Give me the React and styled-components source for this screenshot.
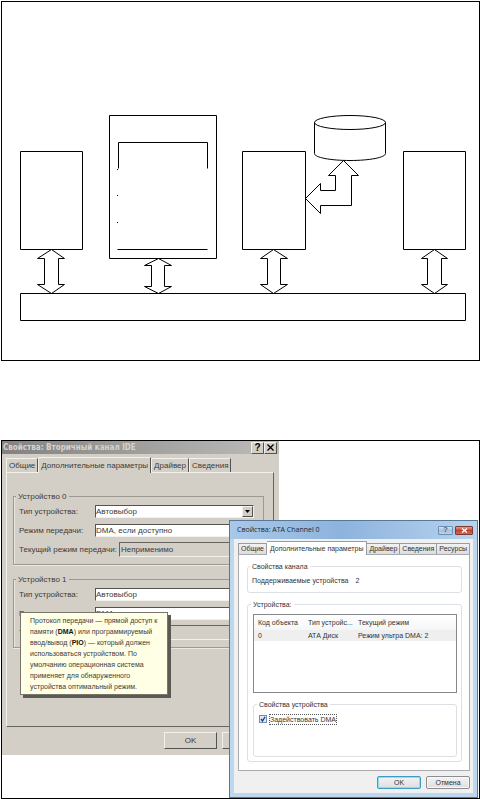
import { useState } from "react";
import styled, { createGlobalStyle, css } from "styled-components";

const GlobalStyle = createGlobalStyle`
  * {
    box-sizing: border-box;
  }
  body {
    margin: 0;
    background: #fff;
    font-family: "Liberation Sans", Arial, sans-serif;
    color: #333;
  }
`;

const Page = styled.main`
  display: flex;
  flex-direction: column;
  gap: 79px;
  padding: 1px 0 0 1px;
`;

const Frame = styled.section`
  border: 1px solid #000;
`;

const Diagram = styled.svg`
  display: block;
  width: 100%;
  height: auto;
  fill: none;
  stroke: #000;
  stroke-width: 1;
`;

/* both windows share one grid cell, the second lies over the first */
const Desktop = styled(Frame)`
  display: grid;
`;

const ClassicWindow = styled.div`
  grid-area: 1 / 1;
  position: relative;
  justify-self: start;
  align-self: start;
  width: calc(100% - 200px);
  background: #d3cfc7;
  color: #3c3b3a;
  font-size: 8px;
  line-height: 11px;
`;

const ClassicTitleBar = styled.header`
  display: flex;
  align-items: center;
  justify-content: space-between;
  height: 13px;
  padding: 0 2px 0 1px;
  background: linear-gradient(to right, #828282, #bdbcba);
`;

const ClassicTitle = styled.h2`
  margin: 0;
  font: bold 8px/12px "DejaVu Sans Condensed", "DejaVu Sans", sans-serif;
  color: #d6d3cd;
`;

const ClassicTitleButtons = styled.div`
  display: flex;
`;

const ClassicTitleButton = styled.button`
  display: flex;
  align-items: center;
  justify-content: center;
  width: 13px;
  height: 12px;
  padding: 0;
  border: 1px solid;
  border-color: #f3f1ec #55534f #55534f #f3f1ec;
  background: #d3cfc7;
  font: bold 10px/10px "Liberation Sans", sans-serif;
  color: #000;
`;

const ClassicTabs = styled.div`
  display: flex;
  align-items: flex-end;
  height: 18px;
  padding-left: 4px;
`;

const ClassicTab = styled.button`
  height: ${(p) => (p.$active ? 16 : 14)}px;
  margin-bottom: ${(p) => (p.$active ? -1 : 0)}px;
  padding: 0 2px;
  border: 1px solid;
  border-color: #f3f1ec #55534f transparent #f3f1ec;
  border-bottom: 0;
  background: #d3cfc7;
  font: inherit;
  color: inherit;
  white-space: nowrap;
  z-index: ${(p) => (p.$active ? 1 : 0)};
`;

const ClassicPanel = styled.div`
  display: flex;
  flex-direction: column;
  gap: 9px;
  margin: 0 5px 0 4px;
  padding: 18px 9px 78px 6px;
  border: 1px solid;
  border-color: #f3f1ec #66645f #66645f #f3f1ec;
`;

const ClassicGroup = styled.fieldset`
  min-width: 0;
  margin: 0;
  padding: 0 9px 5px 5px;
  border: 1px solid #9c9993;
  box-shadow: inset 1px 0 #ebe8e2, 0 1px #ebe8e2;
`;

const ClassicLegend = styled.legend`
  margin-left: -3px;
  padding: 0 2px;
`;

const Field = styled.div`
  display: flex;
  align-items: center;
  height: 19px;
`;

const FieldLabel = styled.label`
  flex: none;
  width: ${(p) => (p.$wide ? 100 : 76)}px;
  white-space: nowrap;
`;

const SelectBox = styled.div`
  display: flex;
  flex: 1;
  height: 13px;
  border: 1px solid;
  border-color: #55534f #f3f1ec #f3f1ec #55534f;
  background: #fff;
`;

const Select = styled.select`
  flex: 1;
  min-width: 0;
  padding: 0;
  border: 0;
  background: none;
  appearance: none;
  font: inherit;
  color: inherit;
`;

const SelectArrow = styled.span`
  display: flex;
  align-items: center;
  justify-content: center;
  width: 11px;
  border: 1px solid;
  border-color: #f3f1ec #55534f #55534f #f3f1ec;
  background: #d3cfc7;
  pointer-events: none;
`;

const ReadOnlyInput = styled.input`
  flex: 1;
  min-width: 0;
  height: 15px;
  padding: 0 1px;
  border: 1px solid;
  border-color: #66645f #f3f1ec #f3f1ec #66645f;
  background: #d3cfc7;
  font: inherit;
  color: inherit;
`;

const ClassicFooter = styled.footer`
  display: flex;
  justify-content: flex-end;
  gap: 5px;
  padding: 5px 4px 6px;
`;

const ClassicButton = styled.button`
  width: 53px;
  height: 17px;
  padding: 0;
  border: 1px solid;
  border-color: #f3f1ec #55534f #55534f #f3f1ec;
  background: #d3cfc7;
  font: inherit;
  color: inherit;
`;

const Tooltip = styled.div`
  position: absolute;
  top: 171px;
  left: 18px;
  min-width: 148px;
  padding: 2px 3px 2px 9px;
  border: 1px solid #77756c;
  background: #ffffe6;
  box-shadow: 3px 3px #5b5954;
  font-size: 7px;
  white-space: nowrap;

  b {
    color: #111;
  }
`;

const AeroWindow = styled.div`
  grid-area: 1 / 1;
  position: relative;
  justify-self: end;
  width: calc(100% - 228px);
  margin: 79px 1px 0 0;
  padding: 0 4px 4px;
  border: 1px solid #56799a;
  background: #bdd7ee;
  font-size: 7px;
  line-height: 11px;
`;

const AeroTitleBar = styled.header`
  display: flex;
  align-items: center;
  justify-content: space-between;
  height: 18px;
  margin: 0 -4px;
  padding: 0 4px 0 7px;
  background: linear-gradient(to right, #a9c8e8, #8db3dd 45%, #b7d3ee);
`;

const AeroTitle = styled.h2`
  margin: 0;
  font: 7px/12px "Open Sans", "Noto Sans", sans-serif;
  color: #1c2733;
`;

const AeroTitleButtons = styled.div`
  display: flex;
  gap: 2px;
`;

const AeroTitleButton = styled.button`
  display: flex;
  align-items: center;
  justify-content: center;
  width: ${(p) => (p.$close ? 18 : 15)}px;
  height: 9px;
  padding: 0;
  border: 1px solid ${(p) => (p.$close ? "#7d3b38" : "#6f8fae")};
  border-radius: 1px;
  background: ${(p) =>
    p.$close
      ? "linear-gradient(#e29b8c, #c4432c 50%, #d2694f)"
      : "linear-gradient(#d5e5f5, #a4c1de 50%, #b9d2ea)"};
  font: bold 8px/8px "Liberation Sans", sans-serif;
  color: #4d6784;
`;

const AeroClient = styled.div`
  padding: 2px 3px 4px 4px;
  background: #f0f0f0;
`;

const AeroTabs = styled.div`
  display: flex;
  align-items: flex-end;
`;

const AeroTab = styled.button`
  height: 11px;
  padding: 0 2px;
  border: 1px solid #9a9c9f;
  border-bottom: 0;
  background: linear-gradient(#f2f2f2, #dcdcdc);
  font: inherit;
  line-height: 10px;
  color: inherit;
  white-space: nowrap;

  & + & {
    border-left: 0;
  }

  ${(p) =>
    p.$active &&
    css`
      height: 14px;
      margin-bottom: -1px;
      padding: 0 3px;
      background: #fff;
      z-index: 1;
    `}
`;

const AeroPanel = styled.div`
  display: flex;
  flex-direction: column;
  gap: 6px;
  padding: 6px 7px 8px 8px;
  border: 1px solid #a9abae;
  background: #fff;
`;

const AeroGroup = styled.fieldset`
  min-width: 0;
  margin: 0;
  padding: ${(p) => p.$padding};
  border: 1px solid #dcdfe3;
  border-radius: 3px;
`;

const AeroLegend = styled.legend`
  margin-left: -2px;
  padding: 0 2px;
`;

const Support = styled.p`
  display: flex;
  gap: 7px;
  margin: 0;
`;

const DeviceList = styled.div`
  height: 79px;
  margin-bottom: 6px;
  border: 1px solid #85888c;
`;

const DeviceTable = styled.table`
  width: 100%;
  table-layout: fixed;
  border-collapse: collapse;

  th,
  td {
    padding: 0 0 0 4px;
    font-weight: normal;
    text-align: left;
    white-space: nowrap;
  }

  th {
    height: 15px;
    background: linear-gradient(#fff, #f5f6f7);
  }

  td {
    height: 11px;
    background: #efefef;
  }

  th:nth-child(-n + 2) {
    width: 50px;
  }
`;

const CheckLabel = styled.label`
  display: flex;
  align-items: center;
  gap: 2px;
  height: 12px;

  span {
    padding: 0 1px;
    outline: 1px dotted #555;
    outline-offset: -1px;
  }
`;

const Checkbox = styled.input`
  width: 8px;
  height: 8px;
  margin: 0;
  appearance: none;
  border: 1px solid #6f8fb0;
  background: #dfeaf6;

  &:checked {
    background: #dfeaf6
      url("data:image/svg+xml,%3Csvg xmlns='http://www.w3.org/2000/svg' viewBox='0 0 6 6'%3E%3Cpath d='M1 3l1.5 2L5 .8' fill='none' stroke='%23203a80' stroke-width='1.3'/%3E%3C/svg%3E");
  }
`;

const AeroFooter = styled.footer`
  display: flex;
  justify-content: flex-end;
  gap: 5px;
  padding-top: 5px;
`;

const AeroButton = styled.button`
  width: 44px;
  height: 13px;
  padding: 0;
  border: 1px solid ${(p) => (p.$primary ? "#3b9cc4" : "#8b8d90")};
  border-radius: 2px;
  background: linear-gradient(#f4f4f4, #dedede);
  box-shadow: inset 0 0 0 1px ${(p) => (p.$primary ? "#8fdcf5" : "#f8f8f8")};
  font: inherit;
  line-height: 10px;
  color: inherit;
`;

// arrow between a block and the bus
function BusArrow({ x, top, left, right, shaftLeft, shaftRight, head }) {
  const bottom = 293;
  return (
    <path
      d={`M${x} ${top}L${right} ${top + head}H${shaftRight}V${bottom - head}H${right}L${x} ${bottom}L${left} ${bottom - head}H${shaftLeft}V${top + head}H${left}Z`}
    />
  );
}

function BusDiagram() {
  return (
    <Diagram viewBox="2 2 477 358" aria-hidden="true">
      <g transform="translate(.5 .5)">
        <path d="M20 151H82V249H20Z" />
        <path d="M109 115H216V258H109Z" />
        <path d="M242 151H305V249H242Z" />
        <path d="M403 151H465V249H403Z" />
        <path d="M20 293H465V320H20Z" />
        <path d="M118 168V142H207V168M117 249H207" />
        <path d="M116.5 169h1M116.5 195h1M116.5 222h1" />
        <ellipse cx="349.5" cy="122" rx="35.5" ry="7" />
        <path d="M314 122V153C314 157 330 160 349.5 160S385 157 385 153V122" />
        <BusArrow x={51} top={249} left={37} right={64} shaftLeft={44} shaftRight={58} head={9} />
        <BusArrow x={158} top={258} left={144} right={171} shaftLeft={151} shaftRight={164} head={7} />
        <BusArrow x={273} top={249} left={260} right={287} shaftLeft={267} shaftRight={280} head={9} />
        <BusArrow x={434} top={249} left={421} right={447} shaftLeft={427} shaftRight={441} head={9} />
        <path d="M343 160L358 175H351V205H320V213L305 198L320 183V190H335V175H328Z" />
      </g>
    </Diagram>
  );
}

function DropDown({ id, value }) {
  return (
    <SelectBox>
      <Select id={id} defaultValue={value}>
        <option>{value}</option>
      </Select>
      <SelectArrow>
        <svg width="5" height="3" viewBox="0 0 5 3">
          <path d="M0 0H5L2.5 3Z" fill="#000" />
        </svg>
      </SelectArrow>
    </SelectBox>
  );
}

function DeviceSettings({ index, mode, current }) {
  const id = `device-${index}`;
  return (
    <ClassicGroup>
      <ClassicLegend>Устройство {index}</ClassicLegend>
      <Field>
        <FieldLabel htmlFor={`${id}-type`}>Тип устройства:</FieldLabel>
        <DropDown id={`${id}-type`} value="Автовыбор" />
      </Field>
      <Field>
        <FieldLabel htmlFor={`${id}-mode`}>Режим передачи:</FieldLabel>
        <DropDown id={`${id}-mode`} value={mode} />
      </Field>
      <Field>
        <FieldLabel $wide htmlFor={`${id}-current`}>
          Текущий режим передачи:
        </FieldLabel>
        <ReadOnlyInput id={`${id}-current`} readOnly value={current} />
      </Field>
    </ClassicGroup>
  );
}

function IdeChannelWindow() {
  return (
    <ClassicWindow>
      <ClassicTitleBar>
        <ClassicTitle>Свойства: Вторичный канал IDE</ClassicTitle>
        <ClassicTitleButtons>
          <ClassicTitleButton>?</ClassicTitleButton>
          <ClassicTitleButton aria-label="Закрыть">
            <svg width="7" height="7" viewBox="0 0 7 7">
              <path d="M.5 .5L6.5 6.5M6.5 .5L.5 6.5" stroke="#000" strokeWidth="1.3" />
            </svg>
          </ClassicTitleButton>
        </ClassicTitleButtons>
      </ClassicTitleBar>
      <ClassicTabs>
        <ClassicTab>Общие</ClassicTab>
        <ClassicTab $active>Дополнительные параметры</ClassicTab>
        <ClassicTab>Драйвер</ClassicTab>
        <ClassicTab>Сведения</ClassicTab>
      </ClassicTabs>
      <ClassicPanel>
        <DeviceSettings index={0} mode="DMA, если доступно" current="Неприменимо" />
        <DeviceSettings index={1} mode="DMA" current="" />
      </ClassicPanel>
      <ClassicFooter>
        <ClassicButton>OK</ClassicButton>
        <ClassicButton aria-label="Отмена" />
      </ClassicFooter>
      <Tooltip role="tooltip">
        Протокол передачи — прямой доступ к<br />
        памяти (<b>DMA</b>) или программируемый<br />
        ввод/вывод (<b>PIO</b>) — который должен<br />
        использоваться устройством. По<br />
        умолчанию операционная система<br />
        применяет для обнаруженного<br />
        устройства оптимальный режим.
      </Tooltip>
    </ClassicWindow>
  );
}

function AtaChannelWindow() {
  const [dma, setDma] = useState(true);
  return (
    <AeroWindow>
      <AeroTitleBar>
        <AeroTitle>Свойства: ATA Channel 0</AeroTitle>
        <AeroTitleButtons>
          <AeroTitleButton>?</AeroTitleButton>
          <AeroTitleButton $close aria-label="Закрыть">
            <svg width="7" height="5" viewBox="0 0 7 5">
              <path d="M1 .5L6 4.5M6 .5L1 4.5" stroke="#fff" strokeWidth="1.4" />
            </svg>
          </AeroTitleButton>
        </AeroTitleButtons>
      </AeroTitleBar>
      <AeroClient>
        <AeroTabs>
          <AeroTab>Общие</AeroTab>
          <AeroTab $active>Дополнительные параметры</AeroTab>
          <AeroTab>Драйвер</AeroTab>
          <AeroTab>Сведения</AeroTab>
          <AeroTab>Ресурсы</AeroTab>
        </AeroTabs>
        <AeroPanel>
          <AeroGroup $padding="3px 4px 6px">
            <AeroLegend>Свойства канала</AeroLegend>
            <Support>
              Поддерживаемые устройства <span>2</span>
            </Support>
          </AeroGroup>
          <AeroGroup $padding="4px 4px 4px 5px">
            <AeroLegend>Устройства:</AeroLegend>
            <DeviceList>
              <DeviceTable>
                <thead>
                  <tr>
                    <th>Код объекта</th>
                    <th>Тип устройс...</th>
                    <th>Текущий режим</th>
                  </tr>
                </thead>
                <tbody>
                  <tr>
                    <td>0</td>
                    <td>АТА Диск</td>
                    <td>Режим ультра DMA: 2</td>
                  </tr>
                </tbody>
              </DeviceTable>
            </DeviceList>
            <AeroGroup $padding="3px 5px 31px">
              <AeroLegend>Свойства устройства</AeroLegend>
              <CheckLabel>
                <Checkbox type="checkbox" checked={dma} onChange={(e) => setDma(e.target.checked)} />
                <span>Задействовать DMA</span>
              </CheckLabel>
            </AeroGroup>
          </AeroGroup>
        </AeroPanel>
        <AeroFooter>
          <AeroButton $primary>OK</AeroButton>
          <AeroButton>Отмена</AeroButton>
        </AeroFooter>
      </AeroClient>
    </AeroWindow>
  );
}

export default function App() {
  return (
    <>
      <GlobalStyle />
      <Page>
        <Frame>
          <BusDiagram />
        </Frame>
        <Desktop>
          <IdeChannelWindow />
          <AtaChannelWindow />
        </Desktop>
      </Page>
    </>
  );
}
